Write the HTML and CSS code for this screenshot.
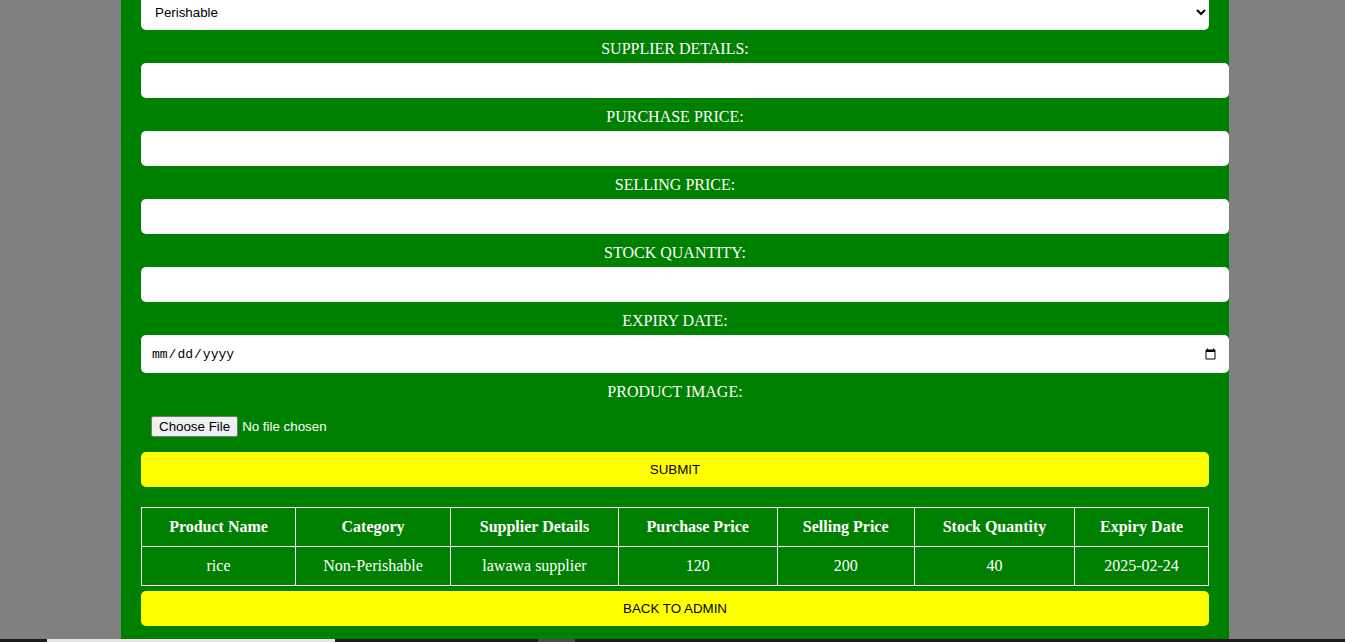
FILE: index.html
```html
<!DOCTYPE html>
<html lang="en">
<head>
<meta charset="utf-8">
<title>Inventory</title>
<link rel="stylesheet" href="styles.css">
</head>
<body>
<div class="container">
  <form class="form">
    <select class="field select">
      <option>Perishable</option>
      <option>Non-Perishable</option>
    </select>
    <label class="label">SUPPLIER DETAILS:</label>
    <input class="field" type="text">
    <label class="label">PURCHASE PRICE:</label>
    <input class="field" type="text">
    <label class="label">SELLING PRICE:</label>
    <input class="field" type="text">
    <label class="label">STOCK QUANTITY:</label>
    <input class="field" type="text">
    <label class="label">EXPIRY DATE:</label>
    <input class="field date" type="date">
    <label class="label">PRODUCT IMAGE:</label>
    <input class="field file" type="file">
    <button class="btn" type="button">SUBMIT</button>
  </form>
  <table class="table">
    <thead>
      <tr>
        <th>Product Name</th>
        <th>Category</th>
        <th>Supplier Details</th>
        <th>Purchase Price</th>
        <th>Selling Price</th>
        <th>Stock Quantity</th>
        <th>Expiry Date</th>
      </tr>
    </thead>
    <tbody>
      <tr>
        <td>rice</td>
        <td>Non-Perishable</td>
        <td>lawawa supplier</td>
        <td>120</td>
        <td>200</td>
        <td>40</td>
        <td>2025-02-24</td>
      </tr>
    </tbody>
  </table>
  <button class="btn back" type="button">BACK TO ADMIN</button>
</div>
<div class="strip"><span class="seg seg-light"></span><span class="seg seg-mid"></span></div>
</body>
</html>
```
FILE: styles.css
```css
html, body {
  margin: 0;
  padding: 0;
  height: 100%;
  overflow: hidden;
}
body {
  background: #808080;
  font-family: "Liberation Serif", "Times New Roman", serif;
  font-size: 16px;
}
.container {
  width: 1068px;
  padding: 20px;
  margin: -25px 0 0 121px;
  background: #008000;
  border-radius: 10px;
}
.form {
  display: flex;
  flex-direction: column;
  align-items: flex-start;
}
.label {
  display: block;
  align-self: stretch;
  text-align: center;
  color: #ffffff;
  margin-top: 5px;
  line-height: 18px;
}
.field {
  display: block;
  width: 100%;
  padding: 10px;
  margin: 5px 0;
  border: none;
  border-radius: 5px;
  background: #ffffff;
  font-family: "Liberation Sans", Arial, sans-serif;
  font-size: 13.33px;
  color: #000000;
  outline: none;
}
.select {
  box-sizing: border-box;
  margin-top: 0;
  height: 35px;
  padding: 0 6px 1px 10px;
}
.date {
  font-family: "Liberation Mono", "DejaVu Sans Mono", monospace;
  font-size: 13px;
  padding-top: 11px;
  padding-bottom: 10px;
}
.file {
  box-sizing: border-box;
  height: 41px;
  min-height: 0;
  max-height: 41px;
  flex: 0 0 auto;
  padding: 10px 10px 10px;
  margin-bottom: 0;
  line-height: 20px;
  overflow: hidden;
  background: transparent;
  color: #ffffff;
}
.btn {
  display: block;
  box-sizing: border-box;
  width: 100%;
  padding: 10px;
  margin: 5px 0;
  border: none;
  border-radius: 5px;
  background: #ffff00;
  color: #000000;
  font-family: "Liberation Sans", Arial, sans-serif;
  font-size: 13.33px;
  line-height: 15px;
  cursor: pointer;
}
.table {
  width: 100%;
  border-collapse: collapse;
  margin-top: 15px;
  color: #ffffff;
}
.table th,
.table td {
  border: 1px solid #ffffff;
  padding: 10px;
  text-align: center;
  line-height: 18px;
}
.table th {
  font-weight: bold;
}
.back {
  margin-top: 5px;
}
.strip {
  position: fixed;
  left: 0;
  right: 0;
  bottom: 0;
  height: 3px;
  background: #1c1c1c;
}
.seg {
  position: absolute;
  top: 0;
  height: 3px;
}
.seg-light {
  left: 47px;
  width: 288px;
  background: #e6e6e6;
}
.seg-mid {
  left: 538px;
  width: 37px;
  background: #4a4a4a;
}
```
